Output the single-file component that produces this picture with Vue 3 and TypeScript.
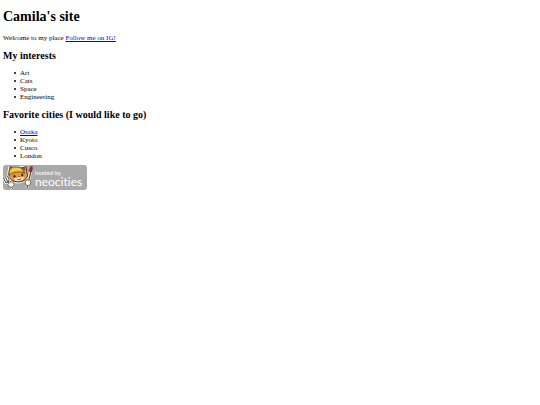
<script setup lang="ts">
interface City {
  name: string
  href?: string
}

const interests: string[] = ['Art', 'Cats', 'Space', 'Engineering']
const cities: City[] = [
  { name: 'Osaka', href: '#osaka' },
  { name: 'Kyoto' },
  { name: 'Cusco' },
  { name: 'London' },
]
</script>

<template>
  <main class="page">
    <h1>Camila's site</h1>
    <p>Welcome to my place <a href="#instagram">Follow me on IG!</a></p>
    <h2>My interests</h2>
    <ul>
      <li v-for="item in interests" :key="item">{{ item }}</li>
    </ul>
    <h2>Favorite cities (I would like to go)</h2>
    <ul>
      <li v-for="city in cities" :key="city.name">
        <a v-if="city.href" :href="city.href">{{ city.name }}</a>
        <template v-else>{{ city.name }}</template>
      </li>
    </ul>
    <a class="badge" href="#neocities">
      <svg class="cat" viewBox="0 0 30 25" aria-hidden="true">
        <!-- ears and head -->
        <path d="M5 7 6 1.5 11 2 17 2 22.5 .8 24 6 25.5 11 22.5 16 16 18 9 17 5 13Z" fill="#fff" stroke="#fff" stroke-width="1" stroke-linejoin="round" />
        <path d="M6 8 7 1.5 12 3 18 3 23 1.5 24 7.5 24.8 11 21.5 15.5 16 17 9.5 16 6 12Z" fill="#e8953c" stroke="#4a3020" stroke-width="1" stroke-linejoin="round" />
        <path d="M19 3.5 21.8 2.5 22 6Z" fill="#8c4a2c" />
        <path d="M11 13.5 14 13 16 11.5 18 12.5 21.5 12 19.5 15 15.5 16.3 12 15.8Z" fill="#fff4df" />
        <!-- hard hat -->
        <path d="M6 9C5.5 4 9 1.5 13 2 17 2 20 4 20.5 6.5L22 8C16 6 10 7 5.5 10.5Z" fill="#edbd38" stroke="#59421b" stroke-width=".8" />
        <path d="M9 6C11 3.5 15 3 18 5" fill="none" stroke="#ffe07a" stroke-width="1" />
        <!-- face -->
        <ellipse cx="11.5" cy="11.2" rx="1" ry="1.3" fill="#302019" />
        <ellipse cx="19.3" cy="9.9" rx="1" ry="1.3" fill="#302019" />
        <path d="M15 11.5 17 11 16.3 12.5Z" fill="#69352a" />
        <path d="M13.5 13.5Q16 15.5 18.5 12.5L17.5 14.7Q16 16 14 14.7Z" fill="#bc4737" />
        <!-- fork -->
        <path d="M.7 13 2.5 17.5Q6 18 6.2 14.5L4.5 11M2.6 12 4.5 16.5 10 24" fill="none" stroke="#fff" stroke-width="2.4" />
        <path d="M.7 13 2.5 17.5Q6 18 6.2 14.5L4.5 11M2.6 12 4.5 16.5 10 24" fill="none" stroke="#3d3d3d" stroke-width="1" />
        <!-- paintbrush -->
        <path d="M28 5 24 23" stroke="#fff" stroke-width="2.8" />
        <path d="M28 6 24 23" stroke="#59402e" stroke-width="1.2" />
        <path d="M26 6.5 27 2.5 29 1 29.5 3.5 28.5 7Z" fill="#a52825" stroke="#762522" stroke-width=".5" />
        <!-- paws -->
        <ellipse cx="8" cy="19.5" rx="3" ry="2.8" fill="#fff" stroke="#60503f" stroke-width=".8" />
        <ellipse cx="25" cy="17.5" rx="2.8" ry="3.1" fill="#fff" stroke="#60503f" stroke-width=".8" />
        <path d="M6.5 18Q8 16.8 9.5 18" fill="none" stroke="#e3a761" stroke-width="1" />
        <path d="M23.7 16Q25 14.7 26.3 16" fill="none" stroke="#e3a761" stroke-width="1" />
      </svg>
      <span class="wording">
        <span class="hosted">hosted by</span>
        <span class="brand">neocities</span>
      </span>
    </a>
  </main>
</template>

<style>
body {
  margin: 0;
  background: #fff;
}
</style>

<style scoped>
.page {
  padding: 9px 3px;
  color: #000;
  font-family: "Liberation Serif", "Times New Roman", serif;
  font-size: 7px;
  line-height: 8px;
}

h1 {
  margin: 0 0 9px;
  font-size: 14px;
  line-height: 16px;
}

h2 {
  margin: 8px 0 7px;
  font-size: 10px;
  line-height: 12px;
}

p {
  margin: 0;
}

ul {
  margin: 0;
  padding-left: 11px;
  list-style: none;
}

li {
  display: flex;
  align-items: center;
  gap: 4px;
}

li::before {
  content: "";
  width: 2px;
  height: 2px;
  border-radius: 50%;
  background: #000;
}

a {
  color: #0000ee;
}

.badge {
  display: inline-flex;
  gap: 2px;
  margin-top: 5px;
  padding-right: 5px;
  border-radius: 3px;
  background: #a9a9a9;
  color: #fff;
  font-family: Lato, "Open Sans", sans-serif;
  font-variant-ligatures: none;
  text-decoration: none;
}

.cat {
  width: 30px;
  height: 25px;
}

.wording {
  display: flex;
  flex-direction: column;
  padding-top: 4px;
}

.hosted {
  font-size: 6px;
  line-height: 7px;
}

.brand {
  font-size: 12px;
  line-height: 12px;
}
</style>
